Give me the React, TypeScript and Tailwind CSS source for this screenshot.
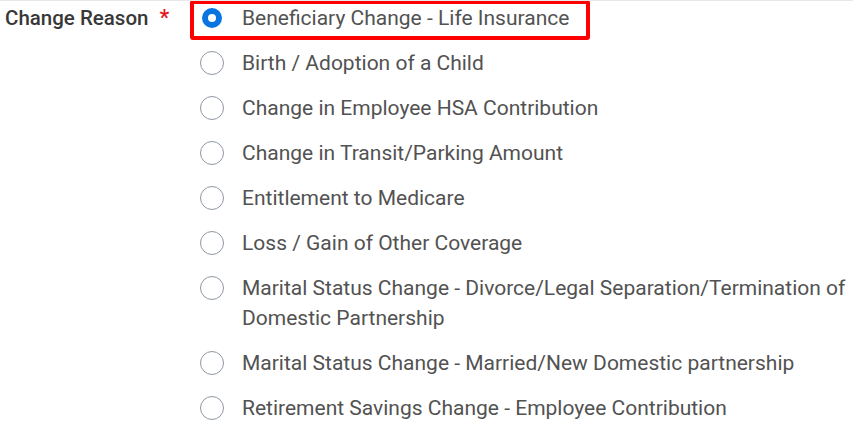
const reasons = [
  "Beneficiary Change - Life Insurance",
  "Birth / Adoption of a Child",
  "Change in Employee HSA Contribution",
  "Change in Transit/Parking Amount",
  "Entitlement to Medicare",
  "Loss / Gain of Other Coverage",
  "Marital Status Change - Divorce/Legal Separation/Termination of Domestic Partnership",
  "Marital Status Change - Married/New Domestic partnership",
  "Retirement Savings Change - Employee Contribution",
];

function Radio({ checked }: { checked: boolean }) {
  if (checked) {
    return (
      <span className="flex h-[24px] w-[24px] shrink-0 items-center justify-center">
        <span className="block h-[20px] w-[20px] rounded-full border-[6px] border-[#0875e1] bg-white" />
      </span>
    );
  }
  return <span className="block h-[24px] w-[24px] shrink-0 rounded-full border-[1.5px] border-[#8f98a3] bg-white" />;
}

export default function App() {
  const selected = 0;
  return (
    <div className="h-[447px] w-[853px] overflow-hidden border-t border-[#e8e8e8] bg-white font-['Roboto',sans-serif]">
      <div className="-mt-px flex">
        {/* Label */}
        <div className="flex w-[190px] shrink-0 items-start pl-[5px] pt-[3px] leading-[30px]">
          <span className="text-[20.5px] font-medium text-[#383838]">Change Reason</span>
          <span className="ml-[11px] text-[22px] font-medium text-[#e4151d]">*</span>
        </div>

        {/* Options */}
        <ul className="flex flex-1 flex-col gap-[15px] pt-[3px]">
          {reasons.map((r, i) => (
            <li key={r} className="relative flex items-start gap-[18px] pl-[10px]">
              {i === selected && (
                <span className="absolute left-0 top-[-3px] h-[40px] w-[400px] rounded-[3px] border-[4px] border-[#ff0000]" />
              )}
              <span className="mt-[3px] block shrink-0">
                <Radio checked={i === selected} />
              </span>
              <span className="text-[21px] leading-[30px] text-[#525252]">{r}</span>
            </li>
          ))}
        </ul>
      </div>
    </div>
  );
}
